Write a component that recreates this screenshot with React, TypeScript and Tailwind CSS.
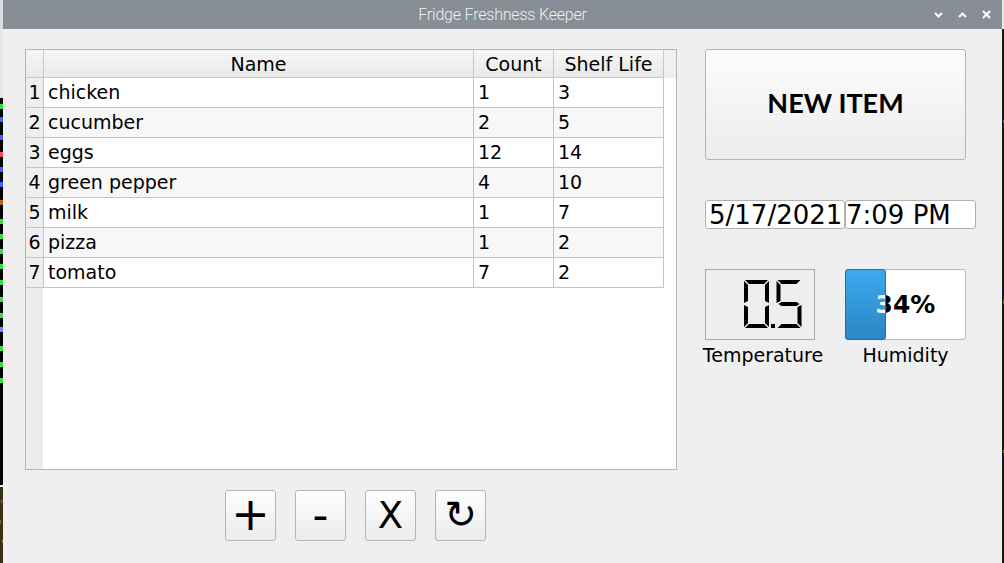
import React from "react";

const rows: [string, string, string][] = [
  ["chicken", "1", "3"],
  ["cucumber", "2", "5"],
  ["eggs", "12", "14"],
  ["green pepper", "4", "10"],
  ["milk", "1", "7"],
  ["pizza", "1", "2"],
  ["tomato", "7", "2"],
];

function Segs({ x0, y0, on }: { x0: number; y0: number; on: string }) {
  const w = 25, h = 48, t = 4, g = 1, m = 24;
  const P: Record<string, number[][]> = {
    a: [[g, 0], [w - g, 0], [w - g - t, t], [g + t, t]],
    d: [[g, h], [w - g, h], [w - g - t, h - t], [g + t, h - t]],
    f: [[0, g], [t, g + t], [t, m - t / 2 - g], [0, m - g]],
    b: [[w, g], [w - t, g + t], [w - t, m - t / 2 - g], [w, m - g]],
    e: [[0, m + g], [t, m + t / 2 + g], [t, h - t - g], [0, h - g]],
    c: [[w, m + g], [w - t, m + t / 2 + g], [w - t, h - t - g], [w, h - g]],
    g: [[g + 1, m], [g + t, m - t / 2], [w - g - t, m - t / 2], [w - g - 1, m], [w - g - t, m + t / 2], [g + t, m + t / 2]],
  };
  return (
    <>
      {on.split("").map((k) => (
        <polygon key={k} points={P[k].map(([x, y]) => `${x0 + x},${y0 + y}`).join(" ")} fill="#000" />
      ))}
    </>
  );
}

const marks: [number, string][] = [
  [107, "#3ddc3d"], [120, "#4a5cff"], [138, "#4a5cff"], [155, "#ff4a4a"], [170, "#4a5cff"], [185, "#4a5cff"],
  [203, "#c0611a"], [222, "#3ddc3d"], [237, "#3ddc3d"], [252, "#3ddc3d"], [267, "#3ddc3d"], [283, "#3ddc3d"],
  [300, "#3ddc3d"], [316, "#3ddc3d"], [330, "#6a8cff"], [349, "#3ddc3d"], [365, "#3ddc3d"], [381, "#3ddc3d"],
];

function LeftStrip() {
  return (
    <svg width="3" height="563" viewBox="0 0 3 563" className="block shrink-0">
      <rect x="0" y="0" width="3" height="29" fill="#d9dcdf" />
      <rect x="0" y="29" width="3" height="69" fill="#e6e6e6" />
      <rect x="0" y="98" width="3" height="387" fill="#000" />
      {marks.map(([y, c], i) => (
        <rect key={i} x="0" y={y - 3} width="3" height="5" fill={c} />
      ))}
      <rect x="0" y="485" width="3" height="2" fill="#f4f4f4" />
      <rect x="0" y="487" width="3" height="76" fill="#3a3216" />
      <rect x="1" y="500" width="1" height="3" fill="#8a7a30" />
      <rect x="0" y="520" width="1" height="4" fill="#7a6a28" />
      <rect x="2" y="540" width="1" height="3" fill="#8a7a30" />
    </svg>
  );
}

function RightStrip() {
  return (
    <svg width="2" height="563" viewBox="0 0 2 563" className="block shrink-0">
      <rect x="0" y="0" width="2" height="29" fill="#e9eaeb" />
      <rect x="0" y="29" width="2" height="534" fill="#1b1a10" />
      <rect x="1" y="120" width="1" height="3" fill="#6a5a20" />
      <rect x="1" y="300" width="1" height="4" fill="#6a5a20" />
      <rect x="1" y="450" width="1" height="3" fill="#6a5a20" />
    </svg>
  );
}

const DJ = "font-['DejaVu_Sans',sans-serif]";

function TitleBar() {
  return (
    <div className="relative h-[29px] shrink-0 bg-[#878e96] flex items-center justify-center">
      <span className="font-['Roboto',sans-serif] font-light text-[16px] text-[#eef0f2] tracking-[-0.2px]">
        Fridge Freshness Keeper
      </span>
      <div className="absolute right-[11px] top-0 h-full flex items-center gap-[15px]">
        <svg width="9" height="6" viewBox="0 0 9 6">
          <path d="M1 1 L4.5 4.5 L8 1" stroke="#fff" strokeWidth="2" fill="none" />
        </svg>
        <svg width="9" height="6" viewBox="0 0 9 6">
          <path d="M1 5 L4.5 1.5 L8 5" stroke="#fff" strokeWidth="2" fill="none" />
        </svg>
        <svg width="9" height="9" viewBox="0 0 9 9">
          <path d="M1 1 L8 8 M8 1 L1 8" stroke="#fff" strokeWidth="2" fill="none" />
        </svg>
      </div>
    </div>
  );
}

function Table() {
  const grid = "grid grid-cols-[18px_430px_80px_110px_12px]";
  return (
    <div className={`w-[652px] h-[421px] border border-[#b4b4b4] bg-white flex flex-col ${DJ} text-[19px] text-black`}>
      <div className={`${grid} h-[28px] shrink-0 bg-gradient-to-b from-[#f7f7f7] to-[#e9e9e9]`}>
        <div className="border-r border-b border-[#c8c8c8]" />
        <div className="border-r border-b border-[#c8c8c8] flex items-center justify-center leading-none pt-[1px]">Name</div>
        <div className="border-r border-b border-[#c8c8c8] flex items-center justify-center leading-none pt-[1px]">Count</div>
        <div className="border-r border-b border-[#c8c8c8] flex items-center justify-center leading-none pt-[1px]">Shelf Life</div>
        <div className="bg-[#f0f0f0]" />
      </div>
      {rows.map(([n, c, s], i) => {
        const bg = i % 2 === 0 ? "bg-white" : "bg-[#f7f7f7]";
        return (
          <div key={n} className={`${grid} h-[30px] shrink-0`}>
            <div className="border-r border-b border-[#c4c4c4] bg-[#efefef] flex items-center justify-center">{i + 1}</div>
            <div className={`border-r border-b border-[#c4c4c4] ${bg} flex items-center pl-[4px]`}>{n}</div>
            <div className={`border-r border-b border-[#c4c4c4] ${bg} flex items-center pl-[4px]`}>{c}</div>
            <div className={`border-r border-b border-[#c4c4c4] ${bg} flex items-center pl-[4px]`}>{s}</div>
            <div className="bg-white" />
          </div>
        );
      })}
      <div className="flex-1 flex">
        <div className="w-[17px] bg-[#ececec]" />
        <div className="flex-1 bg-white" />
      </div>
    </div>
  );
}

function SmallBtn({ children, cls }: { children: React.ReactNode; cls: string }) {
  return (
    <div className="w-[51px] h-[51px] rounded-[3px] border border-[#b5b5b5] bg-gradient-to-b from-[#fdfdfd] to-[#ececec] flex items-center justify-center">
      <span className={`${DJ} text-black leading-none ${cls}`}>{children}</span>
    </div>
  );
}

function Lcd() {
  return (
    <div className="w-[110px] h-[71px] border border-[#a9a9a9] bg-[#eeeeee]">
      <svg width="108" height="69" viewBox="0 0 108 69" className="block">
        <Segs x0={38} y0={10} on="abcdef" />
        <rect x="65" y="54" width="4" height="4" fill="#000" />
        <Segs x0={70.5} y0={10} on="afgcd" />
      </svg>
    </div>
  );
}

function Humidity() {
  const txt = `${DJ} font-bold text-[25px] leading-none`;
  return (
    <div className="relative w-[121px] h-[71px]">
      <div className="w-full h-full rounded-[3px] border border-[#b5b5b5] bg-white flex items-center justify-center">
        <span className={`${txt} text-black`}>34%</span>
      </div>
      <div className="absolute left-0 top-0 h-full w-[41px] rounded-[3px] border border-[#2d6c9c] bg-gradient-to-b from-[#3ca9ee] to-[#2b86c6] overflow-hidden">
        <div className="absolute left-[-1px] top-[-1px] w-[121px] h-[71px] flex items-center justify-center">
          <span className={`${txt} text-white`}>34%</span>
        </div>
      </div>
    </div>
  );
}

export default function App() {
  return (
    <div className="w-[1004px] h-[563px] flex overflow-hidden bg-[#efefef]">
      <LeftStrip />
      <div className="w-[999px] h-full flex flex-col">
        <TitleBar />
        <div className="flex-1 bg-[#efefef] pl-[22px] pt-[20px] flex gap-[28px]">
          <div className="flex flex-col">
            <Table />
            <div className="mt-[20px] pl-[200px] flex gap-[19px]">
              <SmallBtn cls="text-[46px] -mt-[3px]">+</SmallBtn>
              <SmallBtn cls="text-[44px] -mt-[2px]">-</SmallBtn>
              <SmallBtn cls="text-[37px]">X</SmallBtn>
              <SmallBtn cls="text-[39px] -mt-[3px]">↻</SmallBtn>
            </div>
          </div>
          <div className="flex flex-col">
            <div className="w-[261px] h-[111px] rounded-[3px] border border-[#b3b3b3] bg-gradient-to-b from-[#fcfcfc] to-[#ececec] flex items-center justify-center">
              <span className="font-['Lato',sans-serif] font-bold text-[27px] text-black leading-none -mt-[4px]">NEW ITEM</span>
            </div>
            <div className="mt-[40px] flex">
              <div className={`w-[140px] h-[29px] rounded-[3px] border border-[#b0b0b0] bg-white ${DJ} text-[26px] leading-[29px] text-black pl-[3px] overflow-hidden whitespace-nowrap`}>
                5/17/2021
              </div>
              <div className={`w-[131px] h-[29px] rounded-[3px] border border-[#b0b0b0] bg-white ${DJ} text-[26px] leading-[29px] text-black pl-[0px] overflow-hidden whitespace-nowrap`}>
                7:09 PM
              </div>
            </div>
            <div className="mt-[40px] flex gap-[30px]">
              <div className="flex flex-col items-center w-[110px]">
                <Lcd />
                <span className={`${DJ} text-[19px] text-black mt-[1px] ml-[6px] whitespace-nowrap`}>Temperature</span>
              </div>
              <div className="flex flex-col items-center w-[121px]">
                <Humidity />
                <span className={`${DJ} text-[19px] text-black mt-[1px] whitespace-nowrap`}>Humidity</span>
              </div>
            </div>
          </div>
        </div>
      </div>
      <RightStrip />
    </div>
  );
}
